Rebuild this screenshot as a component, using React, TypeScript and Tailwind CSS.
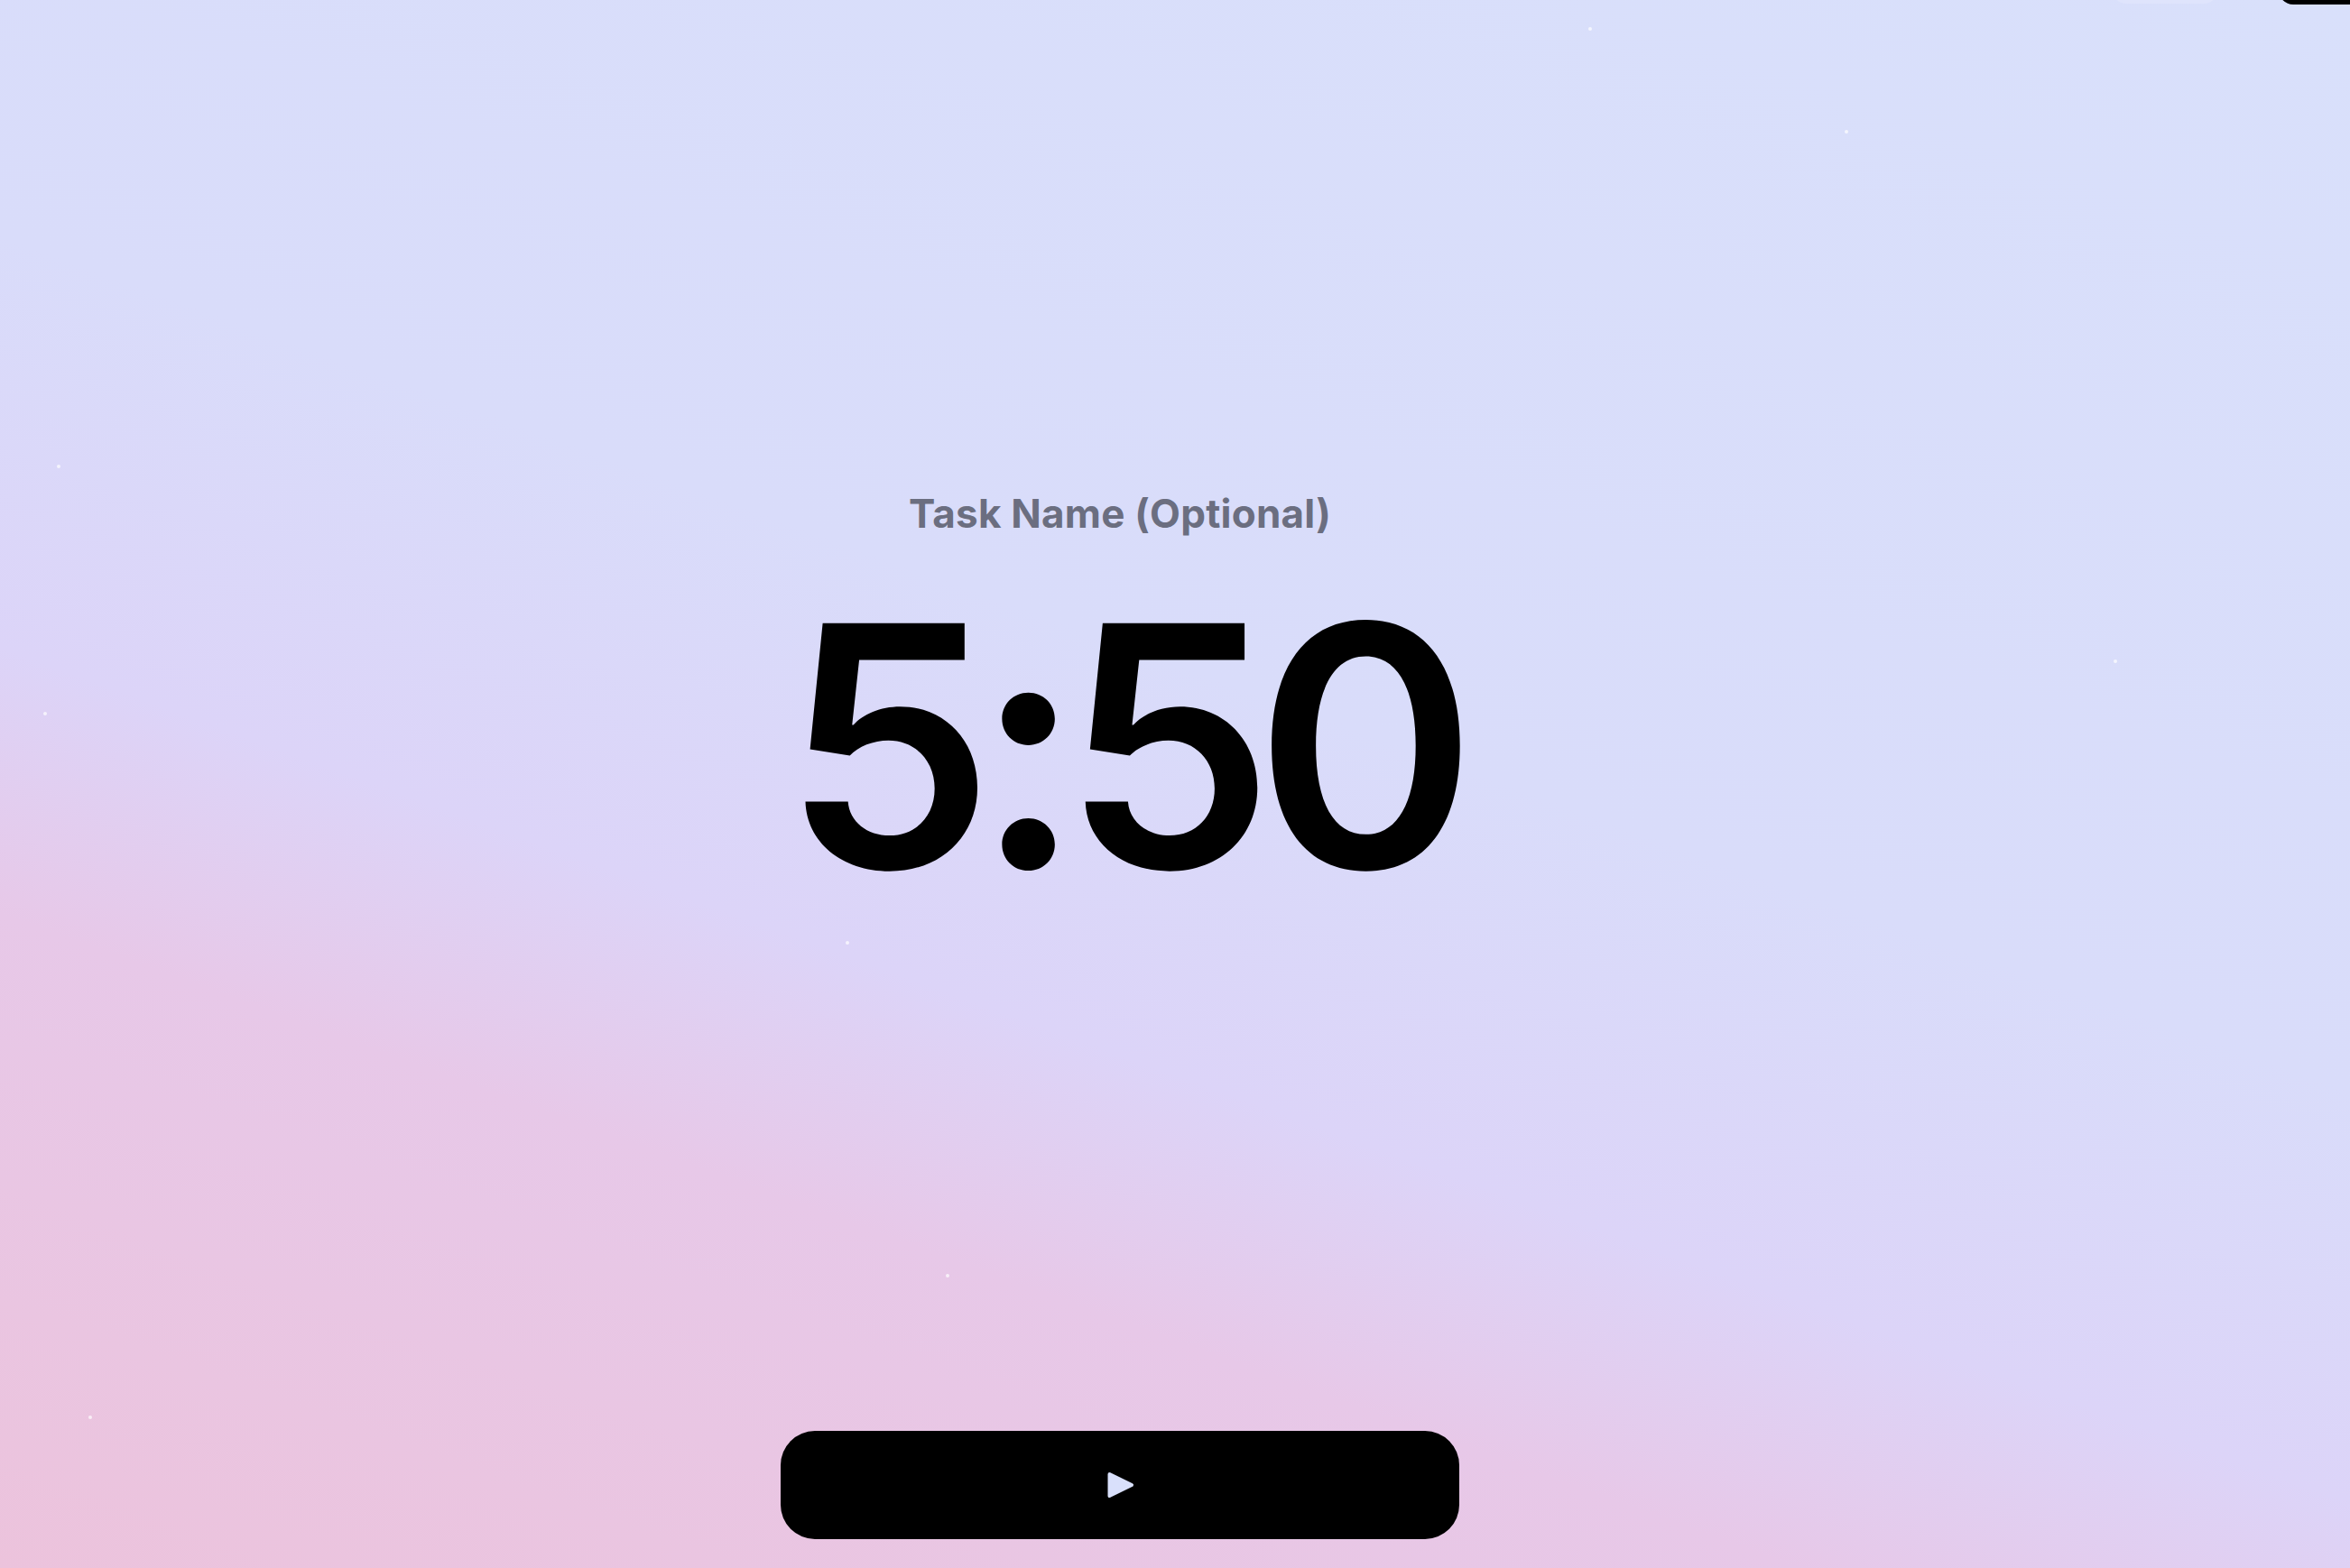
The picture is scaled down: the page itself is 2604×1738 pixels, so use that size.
import React from "react";

const dots = [
  { x: 63, y: 515 },
  { x: 48, y: 789 },
  { x: 2044, y: 144 },
  { x: 937, y: 1043 },
  { x: 1048, y: 1412 },
  { x: 98, y: 1569 },
  { x: 2342, y: 731 },
  { x: 1760, y: 30 },
];

const PlayIcon = () => (
  <svg width="32" height="32" viewBox="0 0 32 32" aria-hidden="true">
    <path
      d="M4.5 4 L29 16 L4.5 28 Z"
      fill="#d9e0fb"
      stroke="#d9e0fb"
      strokeWidth="4"
      strokeLinejoin="round"
    />
  </svg>
);

export default function App() {
  return (
    <div
      className="relative h-screen w-full overflow-hidden bg-[linear-gradient(20deg,#ecc3dc_0%,#e7c8e8_27%,#dcd4f8_38%,#d9dcfa_55%,#d9e0fb_100%)]"
      style={{ fontFamily: "Inter, 'Noto Sans', sans-serif" }}
    >
      {/* header bits scrolled mostly out of view */}
      <div className="absolute top-[-40px] left-[2340px] h-[44px] w-[118px] rounded-2xl bg-[#dfe4fc]" />
      <div className="absolute top-[-40px] left-[2525px] h-[45px] w-[120px] rounded-2xl bg-black" />

      {dots.map((d, i) => (
        <span
          key={i}
          className="absolute h-[4px] w-[4px] rounded-full bg-white/70"
          style={{ left: d.x, top: d.y }}
        />
      ))}

      <main className="flex h-full flex-col items-center pr-[122px]">
        <div className="flex flex-1 flex-col items-center pt-[544px]">
          <p className="text-[44px] leading-[50px] font-bold tracking-[0.005em] text-[#6b6e80]">
            Task Name (Optional)
          </p>
          <h1 className="mt-[46px] text-[373px] leading-none font-semibold tracking-[-0.058em] text-black">
            5:50
          </h1>
        </div>
        <button className="mb-[32px] flex h-[120px] w-[752px] items-center justify-center rounded-[38px] bg-black">
          <PlayIcon />
        </button>
      </main>
    </div>
  );
}
